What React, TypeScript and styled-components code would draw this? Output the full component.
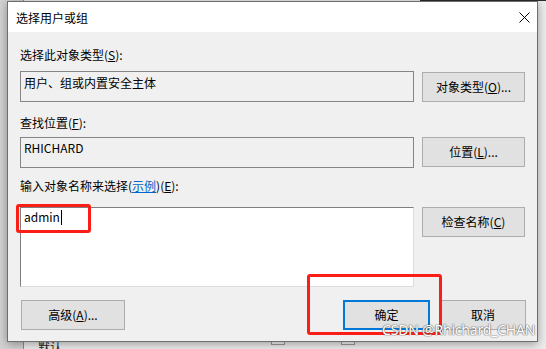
import React from 'react';
import styled, { createGlobalStyle } from 'styled-components';

const Global = createGlobalStyle`
  html, body { margin: 0; padding: 0; }
  body {
    width: 546px; height: 349px; overflow: hidden;
    background: #d4d4d4;
    font-family: "Noto Sans CJK SC", "Microsoft YaHei", sans-serif;
  }
`;

const Desktop = styled.div`
  position: relative;
  width: 546px;
  height: 349px;
  overflow: hidden;
  background: #d2d2d2;
  padding: 1px 0 0 7px;
  box-sizing: border-box;
`;

const BackWindow = styled.div`
  position: absolute;
  left: 23px;
  top: 0;
  right: 0;
  bottom: 0;
  background: #ececec;
  border-left: 1px solid #8c8c8c;
`;

const BackTop = styled.div`
  position: absolute;
  left: 420px;
  top: 0;
  right: 0;
  height: 1px;
  background: #2b2b2b;
`;

const BackText = styled.span`
  position: absolute;
  left: 14px;
  top: 339px;
  font-size: 12px;
  line-height: 16px;
  color: #222;
`;

const BackBox = styled.div<{ $x: number }>`
  position: absolute;
  left: ${p => p.$x}px;
  top: 338px;
  width: 12px;
  height: 5px;
  border: 1px solid #9a9a9a;
  background: #f4f4f4;
`;

const Dialog = styled.div`
  position: relative;
  z-index: 1;
  width: 531px;
  height: 341px;
  box-sizing: border-box;
  border: 1px solid #6e6e6e;
  background: #f0f0f0;
  box-shadow: 0 2px 9px rgba(0, 0, 0, 0.35);
  display: flex;
  flex-direction: column;
`;

const TitleBar = styled.div`
  height: 30px;
  background: #ffffff;
  display: flex;
  align-items: center;
  justify-content: space-between;
  padding-left: 8px;
`;

const Title = styled.span`
  font-size: 12px;
  line-height: 16px;
  color: #000;
  margin-top: 1px;
`;

const CloseBtn = styled.div`
  width: 26px;
  height: 30px;
  display: flex;
  align-items: center;
  justify-content: center;
`;

const Body = styled.div`
  flex: 1;
  display: flex;
  flex-direction: column;
  padding: 0 11px 0 12px;
`;

const Label = styled.div<{ $mt: number }>`
  margin-top: ${p => p.$mt}px;
  font-size: 12px;
  line-height: 16px;
  height: 16px;
  color: #000;
  white-space: nowrap;
`;

const Row = styled.div<{ $mt: number }>`
  margin-top: ${p => p.$mt}px;
  display: flex;
  align-items: flex-start;
  gap: 8px;
`;

const Field = styled.div<{ $pt: number }>`
  width: 394px;
  height: 31px;
  box-sizing: border-box;
  border: 1px solid #858585;
  background: #f0f0f0;
  padding: ${p => p.$pt}px 3px 0 3px;
  font-size: 12px;
  line-height: 16px;
  color: #000;
`;

const TextArea = styled.div`
  width: 394px;
  height: 80px;
  box-sizing: border-box;
  background: #ffffff;
  border-top: 1px solid #7e7e7e;
  border-left: 1px solid #7e7e7e;
  border-right: 1px solid #dcdcdc;
  border-bottom: 1px solid #dcdcdc;
  padding: 1px 3px 0 3px;
  font-size: 12px;
  line-height: 16px;
  color: #000;
  display: flex;
  align-items: flex-start;
`;

const Caret = styled.span`
  display: inline-block;
  width: 1px;
  height: 15px;
  background: #000;
  margin-left: 1px;
  margin-top: 1px;
`;

const Button = styled.div<{ $w: number; $mt?: number; $default?: boolean }>`
  width: ${p => p.$w}px;
  height: 30px;
  margin-top: ${p => p.$mt ?? 0}px;
  box-sizing: border-box;
  background: #e1e1e1;
  border: ${p => (p.$default ? '2px solid #0078d7' : '1px solid #adadad')};
  display: flex;
  align-items: center;
  justify-content: center;
  font-size: 12px;
  line-height: 16px;
  color: #000;
  white-space: nowrap;
  u { text-decoration: underline; }
`;

const Link = styled.span`
  color: #0066cc;
  text-decoration: underline;
`;

const Footer = styled.div`
  margin-top: 13px;
  display: flex;
  align-items: center;
  padding-left: 1px;
`;

const Spacer = styled.div`
  flex: 1;
`;

const Gap = styled.div`
  width: 10px;
`;

const RedBox = styled.div<{ $x: number; $y: number; $w: number; $h: number }>`
  position: absolute;
  z-index: 3;
  left: ${p => p.$x}px;
  top: ${p => p.$y}px;
  width: ${p => p.$w}px;
  height: ${p => p.$h}px;
  box-sizing: border-box;
  border: 3px solid #fb1e17;
  border-radius: 3px;
`;

const Watermark = styled.div`
  position: absolute;
  z-index: 4;
  left: 382px;
  top: 321px;
  font-family: "Noto Sans", "Liberation Sans", sans-serif;
  font-size: 14px;
  line-height: 18px;
  letter-spacing: -0.2px;
  color: #ffffff;
  text-shadow: 0 0 1px #6a6a6a, 0 0 1px #6a6a6a, 0 0 2px rgba(0, 0, 0, 0.35);
  white-space: nowrap;
`;

export default function App() {
  return (
    <>
      <Global />
      <Desktop>
        <BackWindow>
          <BackText>默认</BackText>
          <BackBox $x={247} />
          <BackBox $x={317} />
        </BackWindow>
        <BackTop />
        <Dialog>
          <TitleBar>
            <Title>选择用户或组</Title>
            <CloseBtn>
              <svg width="11" height="11" viewBox="0 0 11 11">
                <path d="M0.5 0.5 L10.5 10.5 M10.5 0.5 L0.5 10.5" stroke="#000" strokeWidth="1" fill="none" />
              </svg>
            </CloseBtn>
          </TitleBar>
          <Body>
            <Label $mt={15}>选择此对象类型(<u>S</u>):</Label>
            <Row $mt={8}>
              <Field $pt={3}>用户、组或内置安全主体</Field>
              <Button $w={103} $mt={1}>对象类型(<u>O</u>)...</Button>
            </Row>
            <Label $mt={13}>查找位置(<u>F</u>):</Label>
            <Row $mt={6}>
              <Field $pt={2}>RHICHARD</Field>
              <Button $w={103}>位置(<u>L</u>)...</Button>
            </Row>
            <Label $mt={10}>输入对象名称来选择(<Link>示例</Link>)(<u>E</u>):</Label>
            <Row $mt={13}>
              <TextArea>
                admin<Caret />
              </TextArea>
              <Button $w={103}>检查名称(<u>C</u>)</Button>
            </Row>
            <Footer>
              <Button $w={104}>高级(<u>A</u>)...</Button>
              <Spacer />
              <Button $w={87} $default>确定</Button>
              <Gap />
              <Button $w={86}>取消</Button>
            </Footer>
          </Body>
        </Dialog>
        <RedBox $x={16} $y={204} $w={75} $h={29} />
        <RedBox $x={307} $y={274} $w={135} $h={61} />
        <Watermark>CSDN @Rhichard_CHAN</Watermark>
      </Desktop>
    </>
  );
}
